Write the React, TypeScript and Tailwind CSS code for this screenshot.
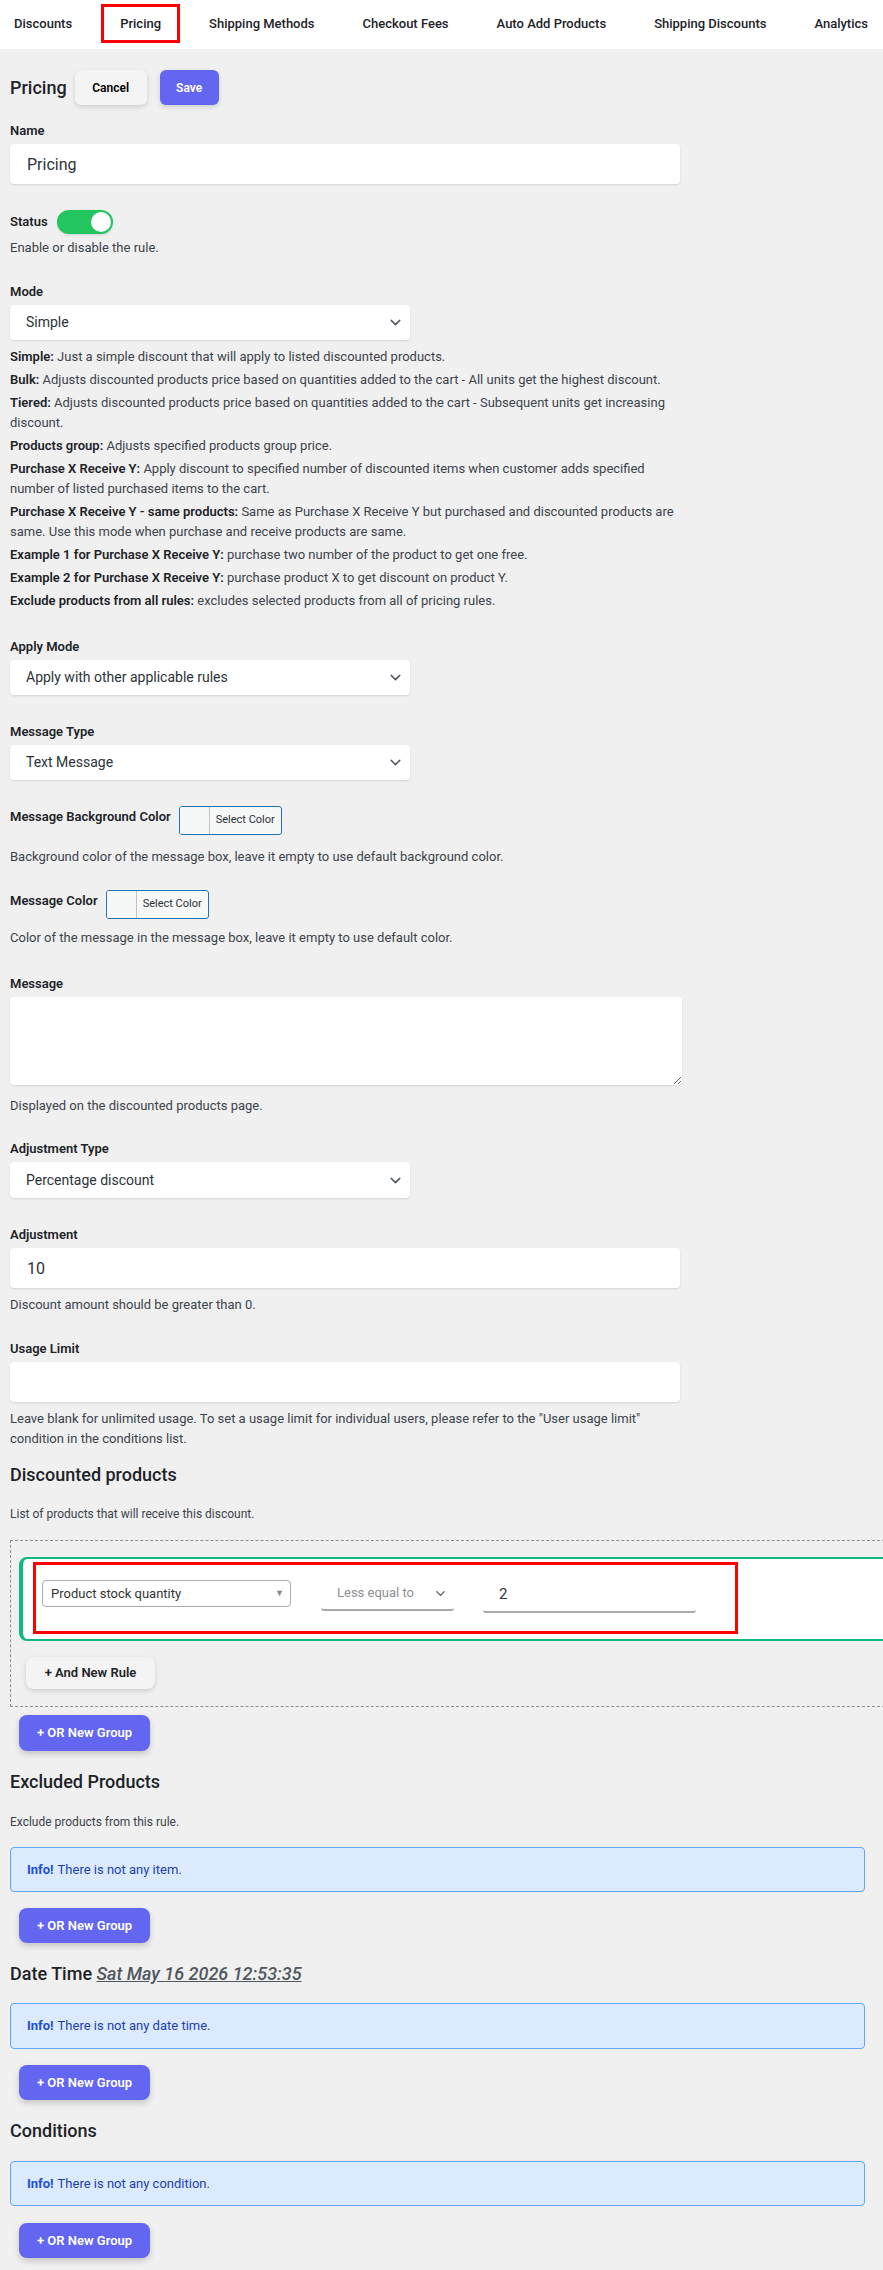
import { ChevronDown } from "lucide-react";

const tabs = [
  "Discounts",
  "Pricing",
  "Shipping Methods",
  "Checkout Fees",
  "Auto Add Products",
  "Shipping Discounts",
  "Analytics",
];

const modeHelp: [string, string][] = [
  ["Simple:", "Just a simple discount that will apply to listed discounted products."],
  ["Bulk:", "Adjusts discounted products price based on quantities added to the cart - All units get the highest discount."],
  ["Tiered:", "Adjusts discounted products price based on quantities added to the cart - Subsequent units get increasing discount."],
  ["Products group:", "Adjusts specified products group price."],
  ["Purchase X Receive Y:", "Apply discount to specified number of discounted items when customer adds specified number of listed purchased items to the cart."],
  ["Purchase X Receive Y - same products:", "Same as Purchase X Receive Y but purchased and discounted products are same. Use this mode when purchase and receive products are same."],
  ["Example 1 for Purchase X Receive Y:", "purchase two number of the product to get one free."],
  ["Example 2 for Purchase X Receive Y:", "purchase product X to get discount on product Y."],
  ["Exclude products from all rules:", "excludes selected products from all of pricing rules."],
];

function Label({ children, className = "" }: { children: React.ReactNode; className?: string }) {
  return <div className={`text-[13px] font-semibold leading-5 text-[#1d2327] ${className}`}>{children}</div>;
}

function Help({ children, className = "" }: { children: React.ReactNode; className?: string }) {
  return <p className={`text-[13px] leading-5 text-[#3c434a] ${className}`}>{children}</p>;
}

function Select({ value, className = "" }: { value: string; className?: string }) {
  return (
    <div
      className={`flex h-[35px] w-[400px] items-center justify-between rounded-[4px] bg-white pl-4 pr-[6px] text-[14px] text-[#2c3338] shadow-[0_1px_2px_rgba(0,0,0,0.12)] ${className}`}
    >
      <span>{value}</span>
      <ChevronDown size={17} strokeWidth={2} className="text-[#50575e]" />
    </div>
  );
}

function TextInput({ value = "" }: { value?: string }) {
  return (
    <input
      readOnly
      value={value}
      className="mt-[3px] block h-10 w-[670px] rounded-[4px] bg-white pl-[17px] text-[16px] text-[#2c3338] shadow-[0_1px_2px_rgba(0,0,0,0.12)] outline-none"
    />
  );
}

function ColorButton() {
  return (
    <div className="flex h-[29px] w-[103px] overflow-hidden rounded-[3px] border border-[#2271b1] bg-[#f6f7f7]">
      <span className="w-[30px] border-r border-[#c3c4c7] bg-[#f6f7f7]" />
      <span className="flex flex-1 items-center pl-[6px] text-[11px] text-[#2c3338]">Select Color</span>
    </div>
  );
}

function OrGroupButton({ className = "" }: { className?: string }) {
  return (
    <button
      className={`ml-[9px] block h-[35px] w-[131px] rounded-lg bg-[#6366f1] text-[13px] font-semibold text-white shadow-[0_3px_6px_rgba(0,0,0,0.18)] ${className}`}
    >
      + OR New Group
    </button>
  );
}

function InfoBox({ text, className = "" }: { text: string; className?: string }) {
  return (
    <div
      className={`flex h-[45px] items-center rounded-[4px] border border-[#60a5fa] bg-[#dbeafe] pl-[16px] text-[13px] text-[#1e40af] ${className}`}
    >
      <b className="mr-1 font-bold text-[#1d4ed8]">Info!</b> {text}
    </div>
  );
}

function SectionTitle({ children, className = "" }: { children: React.ReactNode; className?: string }) {
  return <h2 className={`text-[18px] font-medium leading-[26px] text-[#1d2327] ${className}`}>{children}</h2>;
}

export default function App() {
  return (
    <div className="min-h-[2270px] overflow-hidden bg-[#f0f0f1] font-['Roboto',sans-serif]">
      <nav className="h-[49px] bg-white pt-1">
        <ul className="-ml-[5px] flex gap-[10px]">
          {tabs.map((t) => (
            <li
              key={t}
              className={`flex h-[39px] shrink-0 items-center whitespace-nowrap border-[3px] px-4 text-[13px] font-medium text-[#1d2327] ${
                t === "Pricing" ? "border-[#ff0000]" : "border-transparent"
              }`}
            >
              {t}
            </li>
          ))}
        </ul>
      </nav>

      <main className="pb-[13px] pl-[10px] pr-[18px]">
        <div className="mt-[21px] flex h-[35px] items-center">
          <h1 className="text-[18px] font-medium text-[#1d2327]">Pricing</h1>
          <button className="ml-[8px] h-[35px] w-[72px] rounded-md bg-[#f4f4f4] text-[12px] font-semibold text-black shadow-[0_2px_5px_rgba(0,0,0,0.15)]">
            Cancel
          </button>
          <button className="ml-[13px] h-[35px] w-[59px] rounded-md bg-[#6366f1] text-[12px] font-semibold text-white shadow-[0_2px_5px_rgba(0,0,0,0.15)]">
            Save
          </button>
        </div>

        <Label className="mt-4">Name</Label>
        <TextInput value="Pricing" />

        <div className="mt-[26px] flex h-6 items-center gap-[9px]">
          <Label>Status</Label>
          <span className="flex h-6 w-14 items-center justify-end rounded-full bg-[#22c55e] pr-[2px] shadow-sm">
            <span className="h-5 w-5 rounded-full bg-white" />
          </span>
        </div>
        <Help className="mt-1">Enable or disable the rule.</Help>

        <Label className="mt-6">Mode</Label>
        <Select value="Simple" className="mt-[3px]" />
        <div className="mt-[7px] w-[670px]">
          {modeHelp.map(([k, v]) => (
            <Help key={k} className="mt-[3px]">
              <b className="font-semibold text-[#1d2327]">{k}</b> {v}
            </Help>
          ))}
        </div>

        <Label className="mt-[26px]">Apply Mode</Label>
        <Select value="Apply with other applicable rules" className="mt-[3px]" />

        <Label className="mt-[27px]">Message Type</Label>
        <Select value="Text Message" className="mt-[3px]" />

        <div className="mt-[26px] flex items-start gap-[8px]">
          <Label className="pt-[1px]">Message Background Color</Label>
          <ColorButton />
        </div>
        <Help className="mt-3">Background color of the message box, leave it empty to use default background color.</Help>

        <div className="mt-[23px] flex items-start gap-[8px]">
          <Label className="pt-[1px]">Message Color</Label>
          <ColorButton />
        </div>
        <Help className="mt-[9px]">Color of the message in the message box, leave it empty to use default color.</Help>

        <Label className="mt-[26px]">Message</Label>
        <textarea
          readOnly
          className="mt-[3px] block h-[88px] w-[672px] rounded-[4px] bg-white shadow-[0_1px_2px_rgba(0,0,0,0.12)] outline-none"
        />
        <Help className="mt-[11px]">Displayed on the discounted products page.</Help>

        <Label className="mt-[23px]">Adjustment Type</Label>
        <Select value="Percentage discount" className="mt-[3px] h-[36px]" />

        <Label className="mt-[27px]">Adjustment</Label>
        <TextInput value="10" />
        <Help className="mt-[7px]">Discount amount should be greater than 0.</Help>

        <Label className="mt-6">Usage Limit</Label>
        <TextInput />
        <Help className="mt-[7px] w-[670px]">
          Leave blank for unlimited usage. To set a usage limit for individual users, please refer to the "User usage limit"
          condition in the conditions list.
        </Help>

        <SectionTitle className="mt-[13px]">Discounted products</SectionTitle>
        <p className="mt-[17px] text-[12px] leading-[18px] text-[#3c434a]">List of products that will receive this discount.</p>

        {/* product rule group */}
        <div className="mt-[17px] w-[900px] border border-dashed border-[#8c8f94] pb-[17px] pl-[8px] pt-[16px]">
          <div className="rounded-lg border-2 border-l-4 border-[#10b981] bg-white pb-[5px] pl-[10px] pt-[3px]">
            <div className="flex h-[72px] w-[705px] items-start border-[3px] border-[#ff0000] pl-[6px] pt-[12px]">
              <div className="mt-[3px] flex h-[27px] w-[249px] items-center justify-between rounded-[4px] border border-[#aaaaaa] pl-2 pr-[6px] text-[13px] text-[#333]">
                <span>Product stock quantity</span>
                <span className="text-[9px] text-[#888]">▼</span>
              </div>
              <div className="ml-[30px] flex h-[34px] w-[133px] items-center justify-between rounded-b-[3px] border-b-2 border-[#a7aaad] pl-4 pr-[6px] text-[13px] text-[#8c8f94]">
                <span>Less equal to</span>
                <ChevronDown size={15} strokeWidth={2} className="text-[#50575e]" />
              </div>
              <div className="ml-[29px] flex h-[36px] w-[213px] items-center rounded-b-[3px] border-b-2 border-[#a7aaad] pl-4 text-[15px] text-[#2c3338]">
                2
              </div>
            </div>
          </div>
          <button className="ml-[7px] mt-4 block h-8 w-[129px] rounded-lg bg-[#f4f4f4] text-[13px] font-semibold text-[#1d2327] shadow-[0_2px_5px_rgba(0,0,0,0.15)]">
            + And New Rule
          </button>
        </div>
        <OrGroupButton className="mt-2 h-[36px]" />

        <SectionTitle className="mt-[18px]">Excluded Products</SectionTitle>
        <p className="mt-[18px] text-[12px] leading-[18px] text-[#3c434a]">Exclude products from this rule.</p>
        <InfoBox className="mt-4" text="There is not any item." />
        <OrGroupButton className="mt-4" />

        <SectionTitle className="mt-[18px]">
          Date Time <em className="text-[#50575e] underline">Sat May 16 2026 12:53:35</em>
        </SectionTitle>
        <InfoBox className="mt-4 h-[46px]" text="There is not any date time." />
        <OrGroupButton className="mt-4" />

        <SectionTitle className="mt-[18px]">Conditions</SectionTitle>
        <InfoBox className="mt-[17px] h-[44px]" text="There is not any condition." />
        <OrGroupButton className="mt-[17px]" />
      </main>
    </div>
  );
}
